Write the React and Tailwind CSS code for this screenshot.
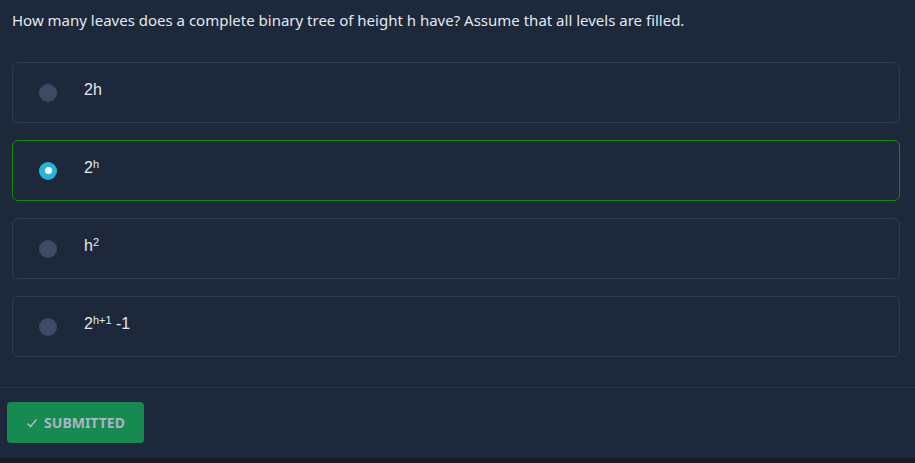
import React from "react";

const Sup = ({ children }) => (
  <sup className="text-[11px]">{children}</sup>
);

const options = [
  { key: "a", label: <>2h</> },
  { key: "b", label: <>2<Sup>h</Sup></>, selected: true },
  { key: "c", label: <>h<Sup>2</Sup></> },
  { key: "d", label: <>2<Sup>h+1</Sup> -1</> },
];

export default function App() {
  return (
    <div className="w-[915px] h-[463px] bg-[#1e283b] flex flex-col overflow-hidden" style={{ fontFamily: '"Noto Sans", Arial, sans-serif' }}>
      <div className="px-3 pt-[10px] text-[15px] text-[#e2e8f0] leading-5">
        How many leaves does a complete binary tree of height h have? Assume that all levels are filled.
      </div>
      <div className="flex flex-col gap-[17px] pl-3 pr-[15px] pt-[32px]">
        {options.map((o) => (
          <div
            key={o.key}
            className={`h-[61px] rounded-md border flex items-center ${o.selected ? "border-[#0b8a0b]" : "border-[#2e3a58]"}`}
          >
            <div className="w-[70px] flex justify-center">
              {o.selected ? (
                <div className="w-[18px] h-[18px] rounded-full bg-[#22b5d8] flex items-center justify-center">
                  <div className="w-[7px] h-[7px] rounded-full bg-white" />
                </div>
              ) : (
                <div className="w-[18px] h-[18px] rounded-full bg-[#3d4a64]" />
              )}
            </div>
            <div
              className="text-[16px] text-[#e2e8f0] -mt-[5px] pl-[1px]"
              style={{ fontFamily: '"Liberation Sans", Arial, sans-serif' }}
            >
              {o.label}
            </div>
          </div>
        ))}
      </div>
      <div className="mt-[30px] border-t border-[#27324a] flex-1 px-[7px] pt-[14px]">
        <div className="w-[137px] h-[41px] rounded bg-[#178a52] flex items-center justify-center gap-[6px] text-[#a9b5c4] text-[14px] font-bold">
          <svg width="12" height="12" viewBox="0 0 12 12" fill="none" stroke="currentColor" strokeWidth="1.6">
            <path d="M1.5 6.5 L4.5 9.5 L10.5 2.5" />
          </svg>
          SUBMITTED
        </div>
      </div>
      <div className="h-[5px] bg-[#161c29]" />
    </div>
  );
}
